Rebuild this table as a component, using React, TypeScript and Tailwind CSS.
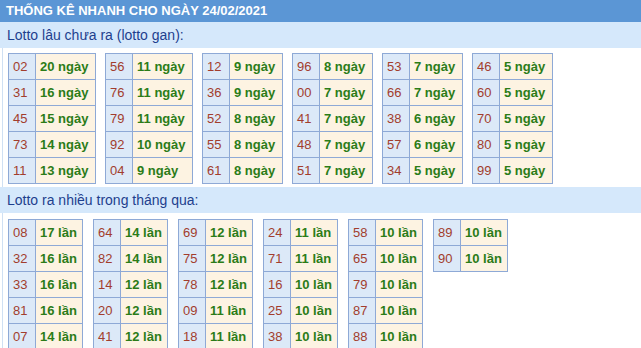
const gan: [string, number][][] = [
  [["02", 20], ["31", 16], ["45", 15], ["73", 14], ["11", 13]],
  [["56", 11], ["76", 11], ["79", 11], ["92", 10], ["04", 9]],
  [["12", 9], ["36", 9], ["52", 8], ["55", 8], ["61", 8]],
  [["96", 8], ["00", 7], ["41", 7], ["48", 7], ["51", 7]],
  [["53", 7], ["66", 7], ["38", 6], ["57", 6], ["34", 5]],
  [["46", 5], ["60", 5], ["70", 5], ["80", 5], ["99", 5]],
];

const nhieu: [string, number][][] = [
  [["08", 17], ["32", 16], ["33", 16], ["81", 16], ["07", 14]],
  [["64", 14], ["82", 14], ["14", 12], ["20", 12], ["41", 12]],
  [["69", 12], ["75", 12], ["78", 12], ["09", 11], ["18", 11]],
  [["24", 11], ["71", 11], ["16", 10], ["25", 10], ["38", 10]],
  [["58", 10], ["65", 10], ["79", 10], ["87", 10], ["88", 10]],
  [["89", 10], ["90", 10]],
];

const NumTable = ({
  rows,
  unit,
  valueWidth,
}: {
  rows: [string, number][];
  unit: string;
  valueWidth: string;
}) => (
  <div className="flex flex-col self-start border-l border-t border-[#8ea9d6]">
    {rows.map(([num, count]) => (
      <div key={num} className="flex h-[26px]">
        <div className="flex w-[27px] items-center border-r border-b border-[#8ea9d6] bg-[#dce9f8] pl-[4px] text-[13px] text-[#a23d2d]">
          {num}
        </div>
        <div
          className={`flex ${valueWidth} items-center border-r border-b border-[#8ea9d6] bg-[#fdf3e2] pl-[4px] text-[13px] font-bold text-[#2b7c18]`}
        >
          {count} {unit}
        </div>
      </div>
    ))}
  </div>
);

const SectionLabel = ({ text }: { text: string }) => (
  <div className="flex h-[26px] items-center bg-[#d5e8fb] pl-[7px] text-[14px] text-[#1e3f8e]">
    {text}
  </div>
);

export default function App() {
  return (
    <div
      className="h-[348px] w-[641px] overflow-hidden bg-white"
      style={{ fontFamily: '"Liberation Sans", Arial, sans-serif' }}
    >
      <div className="flex h-[22px] items-center bg-[#5b96d5] pl-[6px] text-[13px] font-bold text-white">
        THỐNG KÊ NHANH CHO NGÀY 24/02/2021
      </div>
      <SectionLabel text="Lotto lâu chưa ra (lotto gan):" />
      <div className="ml-[2px] flex gap-[9px] border-l border-[#cfe0f3] pt-[5px] pb-[3px] pl-[5px]">
        {gan.map((rows, i) => (
          <NumTable
            key={i}
            rows={rows}
            unit="ngày"
            valueWidth={i < 2 ? "w-[60px]" : "w-[53px]"}
          />
        ))}
      </div>
      <SectionLabel text="Lotto ra nhiều trong tháng qua:" />
      <div className="ml-[2px] flex gap-[10px] border-l border-[#cfe0f3] pt-[6px] pl-[5px]">
        {nhieu.map((rows, i) => (
          <NumTable key={i} rows={rows} unit="lần" valueWidth="w-[47px]" />
        ))}
      </div>
    </div>
  );
}
